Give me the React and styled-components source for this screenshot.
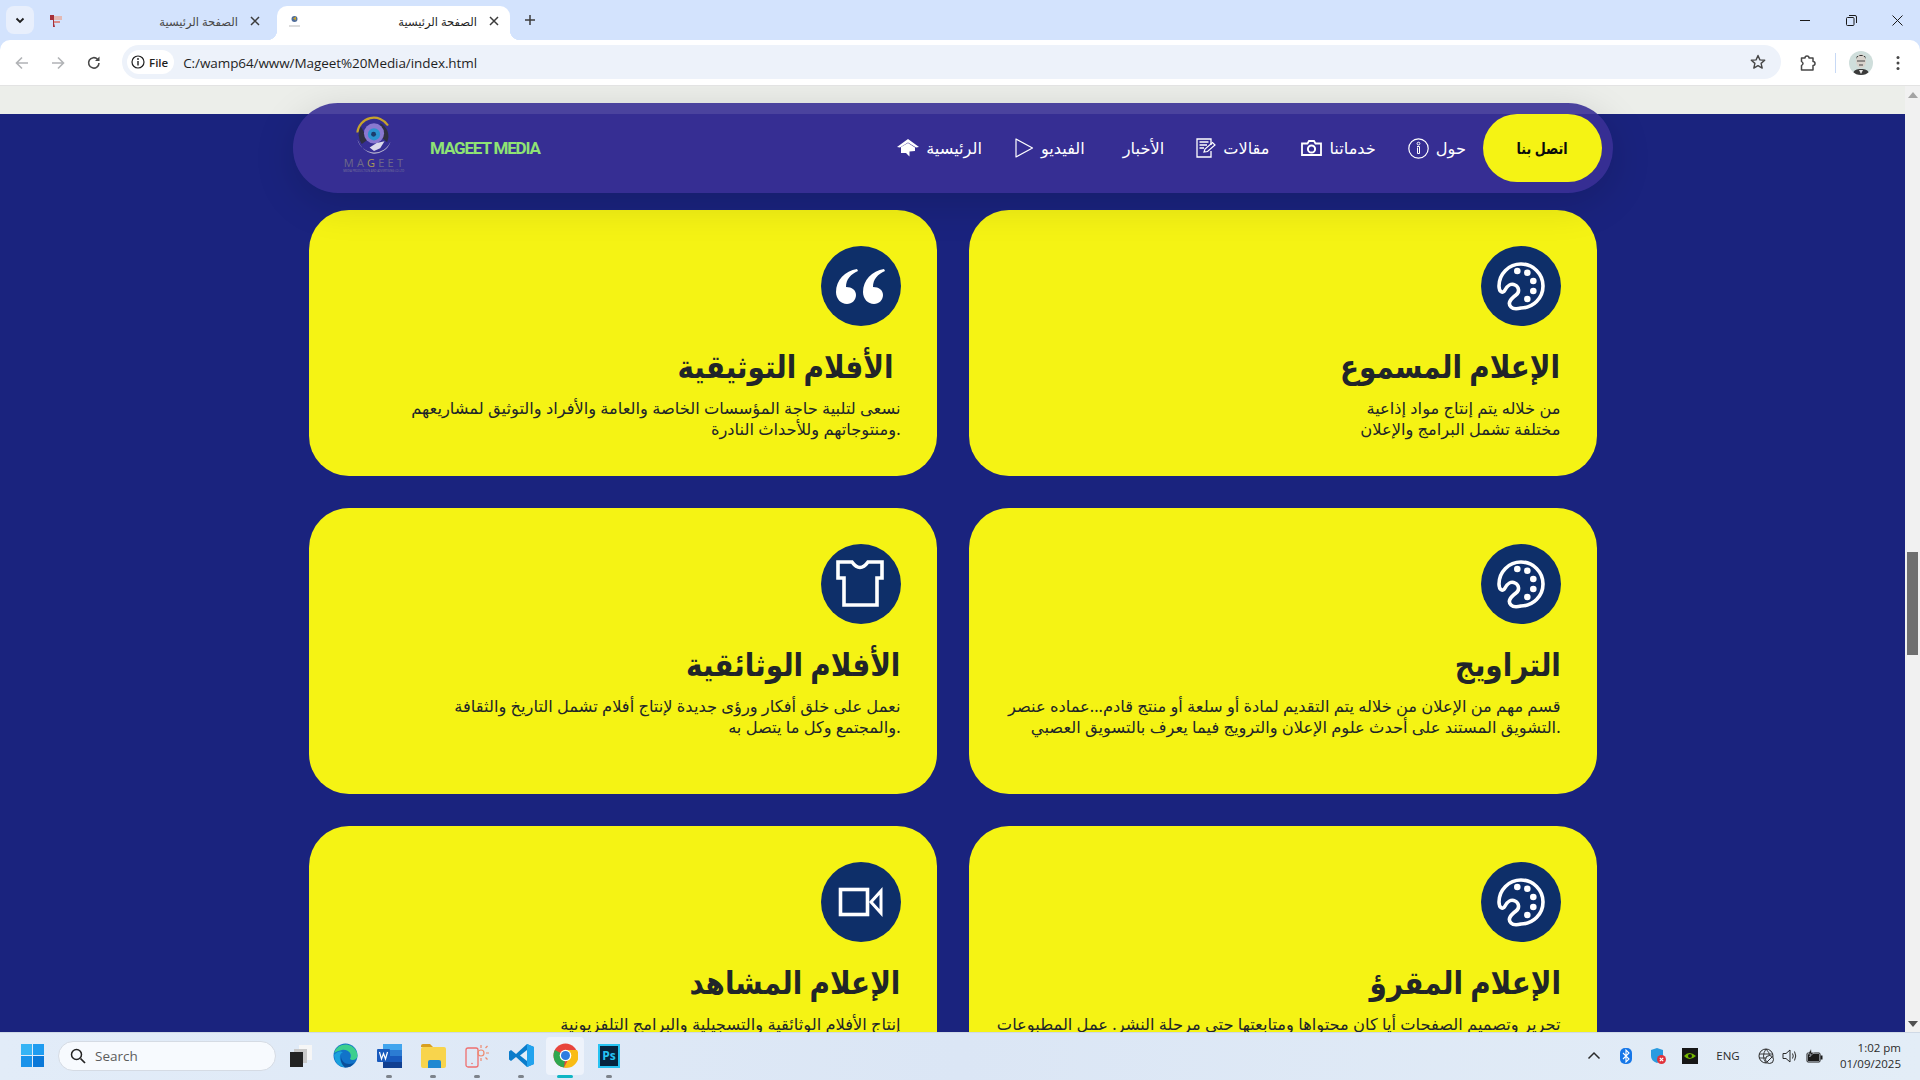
import React from "react";
import styled, { createGlobalStyle } from "styled-components";

const ARABIC = `"Noto Sans", "DejaVu Sans", sans-serif`;
const UI = `"Open Sans", "Noto Sans", "DejaVu Sans", sans-serif`;

const GlobalStyle = createGlobalStyle`
  html, body {
    margin: 0;
    padding: 0;
    height: 100%;
    overflow: hidden;
  }
  body {
    font-family: ${UI};
  }
`;

const Screen = styled.div`
  width: 1920px;
  height: 1080px;
  display: flex;
  flex-direction: column;
  overflow: hidden;
  background: #d3e3fd;
`;

/* browser chrome */
const TabStrip = styled.div`
  height: 40px;
  flex: none;
  display: flex;
  align-items: flex-end;
  background: #d3e3fd;
`;
const TabSearch = styled.div`
  width: 28px;
  height: 28px;
  margin: 0 0 6px 6px;
  border-radius: 8px;
  background: #e8effc;
  display: flex;
  align-items: center;
  justify-content: center;
`;
const Tab = styled.div`
  position: relative;
  width: 233px;
  height: 34px;
  margin-left: ${p => (p.$active ? "0" : "4px")};
  margin-right: ${p => (p.$active ? "0" : "6px")};
  padding: 0 8px 4px 11px;
  box-sizing: border-box;
  display: flex;
  align-items: center;
  border-radius: 10px 10px 0 0;
  color: ${p => (p.$active ? "#1f1f1f" : "#474747")};
  background: ${p => (p.$active ? "#fff" : "transparent")};
  ${p =>
    p.$active &&
    `
    &::before, &::after {
      content: "";
      position: absolute;
      bottom: 0;
      width: 10px;
      height: 10px;
    }
    &::before {
      left: -10px;
      background: radial-gradient(circle at 0 0, transparent 10px, #fff 10.5px);
    }
    &::after {
      right: -10px;
      background: radial-gradient(circle at 100% 0, transparent 10px, #fff 10.5px);
    }
  `}
`;
const TabTitle = styled.span`
  margin-left: auto;
  font-family: ${ARABIC};
  font-size: 11.5px;
  white-space: nowrap;
`;
const TabClose = styled.span`
  width: 16px;
  height: 16px;
  margin-left: 9px;
  display: flex;
  align-items: center;
  justify-content: center;
`;
const NewTab = styled.div`
  width: 28px;
  height: 28px;
  margin: 0 0 6px 6px;
  display: flex;
  align-items: center;
  justify-content: center;
`;
const WindowControls = styled.div`
  margin: 0 0 auto auto;
  display: flex;
  height: 40px;
`;
const WindowButton = styled.div`
  width: 46px;
  display: flex;
  align-items: center;
  justify-content: center;
`;

const Toolbar = styled.div`
  height: 46px;
  flex: none;
  box-sizing: border-box;
  padding: 0 4px;
  display: flex;
  align-items: center;
  background: #fff;
  border-radius: 10px 10px 0 0;
  border-bottom: 1px solid #e3e3e3;
`;
const ToolButton = styled.div`
  width: 36px;
  height: 36px;
  flex: none;
  margin-left: ${p => p.$ml || 0}px;
  display: flex;
  align-items: center;
  justify-content: center;
`;
const Omnibox = styled.div`
  flex: 1;
  height: 34px;
  margin: 0 0 1px 10px;
  padding: 0 15px 0 5px;
  border-radius: 17px;
  display: flex;
  align-items: center;
  background: #edf2fa;
`;
const FileChip = styled.div`
  height: 24px;
  padding: 0 6px 0 4px;
  display: flex;
  align-items: center;
  gap: 4px;
  border-radius: 12px;
  background: #fff;
  font-size: 11.5px;
  font-weight: 600;
  color: #1f1f1f;
`;
const Url = styled.span`
  margin: 1px auto 0 9px;
  font-size: 13.5px;
  color: #1f1f1f;
  letter-spacing: -0.08px;
`;
const ToolDivider = styled.div`
  width: 1px;
  height: 20px;
  margin-left: 9px;
  flex: none;
  background: #c7d9f5;
`;
const Avatar = styled.div`
  width: 24px;
  height: 24px;
  margin-left: 13px;
  flex: none;
  border-radius: 50%;
  overflow: hidden;
  background: #cfdedb;
`;

/* page */
const Body = styled.div`
  flex: 1;
  min-height: 0;
  display: flex;
`;
const Page = styled.div`
  position: relative;
  flex: 1;
  min-width: 0;
  display: flex;
  flex-direction: column;
  overflow: hidden;
  background: #eceeea;
`;
const TopGap = styled.div`
  height: 28px;
  flex: none;
`;
const Main = styled.main`
  flex: 1;
  padding-top: 96px;
  display: flex;
  justify-content: center;
  background: #1a237e;
`;
const CardGrid = styled.div`
  width: 1288px;
  display: grid;
  grid-template-columns: 628px 628px;
  grid-template-rows: 266px 286px 286px;
  gap: 32px;
`;
const Card = styled.article`
  padding: 36px 36px 0;
  display: flex;
  flex-direction: column;
  align-items: flex-end;
  box-sizing: border-box;
  border-radius: 40px;
  background: #f5f314;
  color: #212529;
  font-family: ${ARABIC};
`;
const IconDisc = styled.div`
  width: 80px;
  height: 80px;
  flex: none;
  border-radius: 50%;
  background: #0e2f69;
`;
const CardTitle = styled.h3`
  margin: 15px 0 7px;
  font-size: 32px;
  line-height: 50px;
  font-weight: 700;
  white-space: pre;
  text-align: right;
  transform: scaleX(0.87);
  transform-origin: right center;
`;
const CardText = styled.p`
  margin: 0;
  font-size: 16.3px;
  line-height: 21px;
  text-align: right;
  white-space: nowrap;
`;

const NavBar = styled.nav`
  position: absolute;
  top: 17px;
  left: 293px;
  z-index: 2;
  width: 1320px;
  height: 90px;
  box-sizing: border-box;
  padding: 0 11px 0 48px;
  display: flex;
  align-items: center;
  border-radius: 45px;
  background: rgba(58, 48, 150, 0.9);
  box-shadow: 0 10px 40px rgba(0, 0, 0, 0.15);
`;
const Logo = styled.div`
  width: 65px;
  height: 60px;
  margin-top: -6px;
  flex: none;
  display: flex;
  flex-direction: column;
  align-items: center;
`;
const LogoWord = styled.span`
  font-size: 11px;
  line-height: 11px;
  letter-spacing: 3.2px;
  margin-right: -3px;
  color: #6d6a88;
  b {
    color: #a89a58;
    font-weight: 400;
  }
`;
const LogoTag = styled.span`
  font-size: 4px;
  line-height: 5px;
  color: #7d7a9c;
  white-space: nowrap;
  transform: scale(0.68);
`;
const BrandName = styled.span`
  margin-left: 24px;
  font-family: Roboto, sans-serif;
  font-size: 17px;
  font-weight: 700;
  letter-spacing: -1.15px;
  color: #8fe374;
`;
const NavLinks = styled.div`
  margin-left: auto;
  display: flex;
  align-items: center;
  gap: 32px;
`;
const NavLink = styled.a`
  display: flex;
  align-items: center;
  gap: 7px;
  margin-left: ${p => p.$extra || 0}px;
  font-family: ${ARABIC};
  font-size: 16.2px;
  color: #fff;
  white-space: nowrap;
`;
const ContactButton = styled.a`
  width: 119px;
  height: 68px;
  margin-left: 17px;
  display: flex;
  align-items: center;
  justify-content: center;
  border-radius: 34px;
  background: #f5f314;
  color: #0b0b0b;
  font-family: ${ARABIC};
  font-size: 15.5px;
  font-weight: 700;
`;
const ContactLabel = styled.span`
  display: inline-block;
  transform: scaleX(0.82);
`;

const ScrollBar = styled.div`
  width: 15px;
  flex: none;
  display: flex;
  flex-direction: column;
  align-items: center;
  background: #f1f1f1;
`;
const ScrollArrow = styled.div`
  height: 17px;
  flex: none;
  display: flex;
  align-items: center;
  justify-content: center;
  margin-top: ${p => (p.$end ? "auto" : "0")};
`;
const ScrollThumb = styled.div`
  width: 11px;
  height: 103px;
  margin-top: 449px;
  background: #6f6f6f;
`;

/* taskbar */
const Taskbar = styled.footer`
  height: 48px;
  flex: none;
  box-sizing: border-box;
  padding: 0 19px 2px 21px;
  display: flex;
  align-items: center;
  border-top: 1px solid #cfd9e6;
  background: linear-gradient(90deg, #e2ecf8, #dbe6f5 50%, #e3edf7);
`;
const SearchBox = styled.div`
  width: 218px;
  height: 30px;
  margin: 0 3px 0 14px;
  box-sizing: border-box;
  padding-left: 11px;
  display: flex;
  align-items: center;
  gap: 9px;
  border-radius: 15px;
  border: 1px solid #d5dbe4;
  background: #f7fafe;
  font-size: 13.5px;
  color: #5c5c5c;
`;
const TaskSlot = styled.div`
  position: relative;
  width: 44px;
  height: 44px;
  flex: none;
  display: flex;
  align-items: center;
  justify-content: center;
`;
const ActiveBack = styled.div`
  position: absolute;
  left: 3px;
  top: 3px;
  width: 38px;
  height: 38px;
  border-radius: 4px;
  background: #eef3fb;
`;
const TaskIcon = styled.span`
  position: relative;
  display: flex;
`;
const TaskDot = styled.span`
  position: absolute;
  bottom: 0;
  left: 50%;
  height: 3px;
  width: ${p => (p.$active ? 16 : 6)}px;
  transform: translateX(-50%);
  border-radius: 2px;
  background: ${p => (p.$active ? "#0fb6c4" : "#7d838b")};
`;
const Tray = styled.div`
  margin-left: auto;
  display: flex;
  align-items: center;
`;
const TraySlot = styled.div`
  width: ${p => p.$w || 32}px;
  margin-left: ${p => p.$ml || 0}px;
  display: flex;
  justify-content: center;
  align-items: center;
`;
const TrayLang = styled.span`
  font-size: 11.5px;
  color: #2b2b2b;
`;
const Clock = styled.div`
  width: 75px;
  text-align: right;
  font-size: 11.5px;
  line-height: 16px;
  color: #2b2b2b;
`;

/* icons */
const Svg = ({ s = 16, h, children, ...rest }) => (
  <svg width={s} height={h || s} viewBox={`0 0 ${s} ${h || s}`} fill="none" {...rest}>
    {children}
  </svg>
);

const PaletteIcon = () => (
  <Svg s={80}>
    <path
      d="M40 18A22 22 0 1 1 40 62C36 63 32 63 30 61C26 57 30 53 35 49C39 46 38 41 34 39C30 37 26 40 24 44C22 48 18 46 18 40A22 22 0 0 1 40 18Z"
      stroke="#fff"
      strokeWidth="3.6"
      strokeLinejoin="round"
    />
    {[[36.3, 25], [46.3, 26.7], [52.3, 35], [52.3, 45], [46.3, 53]].map(([x, y]) => (
      <circle key={x + "-" + y} cx={x} cy={y} r="3.3" fill="#fff" />
    ))}
  </Svg>
);
const QuoteIcon = () => {
  const q = "M36 23C24 25 15 34 15 46C15 53 20 58 26 58C31 58 35 54 35 49C35 44 31 41 25 41C25 33 30 28 37 25Z";
  return (
    <Svg s={80}>
      <path d={q} fill="#fff" />
      <path d={q} fill="#fff" transform="translate(27 0)" />
    </Svg>
  );
};
const ShirtIcon = () => (
  <Svg s={80}>
    <path d="M17 18H31Q39 29 47 18H61V34H56V61H23V34H17Z" stroke="#fff" strokeWidth="3.6" />
  </Svg>
);
const VideoIcon = () => (
  <Svg s={80}>
    <rect x="19.5" y="27.5" width="27" height="25" stroke="#fff" strokeWidth="3.6" />
    <path d="M60 29V51L50 40Z" stroke="#fff" strokeWidth="3" />
  </Svg>
);

const HomeNav = () => (
  <Svg s={22} h={18}>
    <path d="M11 0L22 8L19 8.5L11 3.5L3 8.5L0 8Z" fill="#fff" />
    <path d="M4 8L11 4L18 8.5V12L12.5 12.5V17.5L9 14H4Z" fill="#fff" />
  </Svg>
);
const PlayNav = () => (
  <Svg s={20}>
    <path d="M2 1V19L18.5 10Z" stroke="#fff" strokeWidth="1.2" strokeLinejoin="round" />
  </Svg>
);
const ArticleNav = () => (
  <Svg s={20}>
    <path d="M15 7V1H1V19H15V13" stroke="#fff" strokeWidth="1.3" />
    <path d="M3.5 4H12.5M3.5 7H11M3.5 10H8" stroke="#fff" strokeWidth="1.3" />
    <path d="M8 14L9 11L16.5 4.5L19 7L11.5 13.5Z" stroke="#fff" strokeWidth="1.2" />
  </Svg>
);
const CameraNav = () => (
  <Svg s={21} h={16}>
    <path d="M1 3.5H6.5L8 1H13L14.5 3.5H20V15H1Z" stroke="#fff" strokeWidth="1.8" />
    <circle cx="10.5" cy="9" r="3.6" stroke="#fff" strokeWidth="2" />
  </Svg>
);
const InfoNav = () => (
  <Svg s={21}>
    <circle cx="10.5" cy="10.5" r="9.7" stroke="#fff" strokeWidth="1.2" />
    <circle cx="10.5" cy="5.6" r="1.4" stroke="#fff" />
    <path d="M9 8.5H11.5V15.5H9.5V9.5" stroke="#fff" />
  </Svg>
);

const LogoMark = () => (
  <svg width="42" height="42" viewBox="0 0 48 48" fill="none">
    <path d="M5 20A19 19 0 0 1 40 12" stroke="#c7a32b" strokeWidth="2.4" />
    <path d="M12 22L21 12L19 21Z" fill="#c7a32b" />
    <path d="M31 9A17 17 0 0 1 39 31L33 26Z" fill="#2f2f40" />
    <path d="M9 13A18 18 0 0 0 10 33L17 28Z" fill="#2f2f40" />
    <circle cx="24" cy="21" r="11.5" fill="#8a78d0" />
    <circle cx="24" cy="22" r="7" fill="#2b93cf" />
    <circle cx="23.5" cy="22" r="2.8" fill="#1b3b6b" />
    <path d="M5 28A20 20 0 0 0 43 30A19 19 0 0 1 22 44Q10 41 5 28Z" fill="#b6b4cf" />
    <path d="M19 37L27 32L36 30L31 38L24 41Z" fill="#dcdaeb" />
  </svg>
);

const Chevron = () => (
  <Svg s={12}>
    <path d="M2.5 4.5L6 8L9.5 4.5" stroke="#1f1f1f" strokeWidth="1.8" />
  </Svg>
);
const CloseX = () => (
  <Svg s={10}>
    <path d="M1 1L9 9M9 1L1 9" stroke="#3c3c3c" strokeWidth="1.5" />
  </Svg>
);
const Plus = () => (
  <Svg s={12}>
    <path d="M6 1V11M1 6H11" stroke="#3c3c3c" strokeWidth="1.5" />
  </Svg>
);
const FavOne = () => (
  <Svg s={14}>
    <path d="M1 1H5V9L6 13L4 13V6H1Z" fill="#a5303a" />
    <path d="M5 2H13V6H5Z" fill="#e3b9b4" />
    <path d="M5 7H11V9H5Z" fill="#d98b88" />
  </Svg>
);
const FavTwo = () => (
  <Svg s={13}>
    <circle cx="6.5" cy="4" r="3" fill="#4f6d9c" />
    <path d="M5 3.5L8 1.5L8 5.5Z" fill="#c7a32b" />
    <path d="M1 10H12V12H1Z" fill="#dcdcdc" />
  </Svg>
);
const Minimize = () => (
  <Svg s={10}>
    <path d="M0 5.5H10" stroke="#1a1a1a" />
  </Svg>
);
const Restore = () => (
  <Svg s={11}>
    <rect x="0.5" y="2.5" width="7.5" height="8" rx="1" stroke="#1a1a1a" />
    <path d="M3 0.5H9A1.5 1.5 0 0 1 10.5 2V8" stroke="#1a1a1a" />
  </Svg>
);
const WinClose = () => (
  <Svg s={11}>
    <path d="M0.5 0.5L10.5 10.5M10.5 0.5L0.5 10.5" stroke="#1a1a1a" />
  </Svg>
);
const Back = ({ flip }) => (
  <Svg s={16} style={flip ? { transform: "scaleX(-1)" } : undefined}>
    <path d="M14 8H2.5M8 2.5L2.5 8L8 13.5" stroke="#b1b3b6" strokeWidth="1.6" />
  </Svg>
);
const Reload = () => (
  <Svg s={16}>
    <path d="M13 8A5.2 5.2 0 1 1 11.5 4.2" stroke="#474747" strokeWidth="1.6" />
    <path d="M13.5 1.5V6H9Z" fill="#474747" />
  </Svg>
);
const InfoSmall = () => (
  <Svg s={14}>
    <circle cx="7" cy="7" r="6" stroke="#1f1f1f" strokeWidth="1.2" />
    <path d="M7 6V10.5" stroke="#1f1f1f" strokeWidth="1.4" />
    <circle cx="7" cy="4" r="0.9" fill="#1f1f1f" />
  </Svg>
);
const Star = () => (
  <Svg s={16}>
    <path
      d="M8 1.5L9.9 5.9L14.7 6.3L11.1 9.4L12.2 14.1L8 11.6L3.8 14.1L4.9 9.4L1.3 6.3L6.1 5.9Z"
      stroke="#474747"
      strokeWidth="1.4"
      strokeLinejoin="round"
    />
  </Svg>
);
const Puzzle = () => (
  <Svg s={18}>
    <path
      d="M2.5 4H6A2 2 0 0 1 10 4H14V7.5A2 2 0 0 1 14 11.5V16H2.5V11.5Q5.5 9.5 2.5 7.5Z"
      stroke="#474747"
      strokeWidth="1.5"
      strokeLinejoin="round"
    />
  </Svg>
);
const Dots = () => (
  <Svg s={16}>
    <circle cx="8" cy="2.5" r="1.5" fill="#474747" />
    <circle cx="8" cy="8" r="1.5" fill="#474747" />
    <circle cx="8" cy="13.5" r="1.5" fill="#474747" />
  </Svg>
);
const Face = () => (
  <Svg s={24}>
    <ellipse cx="12" cy="10" rx="5" ry="7" fill="#d8d3cc" />
    <path d="M7 8Q12 0 17 8L16 5H8Z" fill="#2a2a2a" />
    <path d="M8 10H16M10 14H14" stroke="#444" strokeWidth="1.2" />
    <path d="M3 24Q5 17 12 18Q19 17 21 24Z" fill="#3a3a3a" />
    <path d="M10 19L12 23L14 19Z" fill="#e6e6e6" />
  </Svg>
);

const WinLogo = () => (
  <Svg s={23} style={{ flex: "none" }}>
    <rect width="11" height="11" fill="#36b4f5" />
    <rect x="12" width="11" height="11" fill="#1f9cf0" />
    <rect y="12" width="11" height="11" fill="#1a93ea" />
    <rect x="12" y="12" width="11" height="11" fill="#0a78d8" />
  </Svg>
);
const SearchGlyph = () => (
  <Svg s={16} style={{ flex: "none" }}>
    <circle cx="6.5" cy="6.5" r="5" stroke="#222" strokeWidth="1.5" />
    <path d="M10.5 10.5L15 15" stroke="#222" strokeWidth="1.7" />
  </Svg>
);
const TaskView = () => (
  <Svg s={24}>
    <rect x="10" y="1" width="13" height="15" fill="#f6f6f6" />
    <rect x="5" y="5" width="13" height="14" fill="#c9c9c9" />
    <rect x="1" y="8" width="13" height="15" fill="#232323" />
  </Svg>
);
const Edge = () => (
  <Svg s={25}>
    <circle cx="12.5" cy="12.5" r="12" fill="#1173c9" />
    <path d="M1 10A12 12 0 0 1 24.5 13C24 17 19 18 17 16C20 11 15 6 9 7Q4 8 1 10Z" fill="#3dcf8e" />
    <path d="M8 13C8 19 14 23 21 20Q18 24.5 12 24.5Q7 22 8 13Z" fill="#0a4f9a" />
    <path d="M1 12Q5 7 10 9Q6 11 7 16Q8 21 12 24.5Q2 23 1 12Z" fill="#1aa1de" />
  </Svg>
);
const Word = () => (
  <Svg s={25} h={26}>
    <rect x="6" y="1" width="19" height="24" rx="1.5" fill="#2b7cd3" />
    <rect x="6" y="1" width="19" height="6" fill="#41a5ee" />
    <rect x="6" y="13" width="19" height="6" fill="#185abd" />
    <rect x="6" y="19" width="19" height="6" fill="#103f91" />
    <rect y="6" width="13" height="13" rx="1" fill="#185abd" />
    <path d="M2.5 9L4.5 16L6.5 10.5L8.5 16L10.5 9" stroke="#fff" strokeWidth="1.2" />
  </Svg>
);
const Folder = () => (
  <Svg s={25} h={26}>
    <path d="M0 3A2 2 0 0 1 2 1H9L12 4H0Z" fill="#d99f1f" />
    <rect y="4" width="25" height="21" rx="2" fill="#f8d44c" />
    <path d="M7 25V19A2 2 0 0 1 9 17H18A2 2 0 0 1 20 19V25Z" fill="#1f88d2" />
  </Svg>
);
const PhoneLink = () => (
  <Svg s={24} h={25}>
    <rect x="1" y="5" width="12" height="19" rx="2" stroke="#ee6f6f" strokeWidth="1.3" />
    <circle cx="7" cy="20.5" r="0.8" fill="#ee6f6f" />
    <circle cx="16" cy="10" r="3" stroke="#ee8a6f" strokeWidth="1.2" />
    <path d="M16 2V5M16 15V18M24 10H21M20.5 5L22.5 3M20.5 14.5L22.5 16.5" stroke="#ee8a6f" strokeWidth="1.2" />
  </Svg>
);
const VsCode = () => (
  <Svg s={25}>
    <path d="M18 1L25 4V21L18 24L7 14L2 18L0 16.5V8.5L2 7L7 11Z" fill="#0a7ccb" />
    <path d="M18 7L11 12.5L18 18Z" fill="#e2edf8" />
    <path d="M18 1L25 4V21L18 24Z" fill="#22a3ee" />
  </Svg>
);
const ChromeLogo = () => (
  <Svg s={25}>
    <circle cx="12.5" cy="12.5" r="12" fill="#e8453c" />
    <path d="M12.5 12.5L1.9 7A12 12 0 0 0 11 24.5Z" fill="#2fa84f" />
    <path d="M12.5 7H24A12 12 0 0 1 11 24.5L16 15Z" fill="#f9bc15" />
    <circle cx="12.5" cy="12.5" r="5.8" fill="#fff" />
    <circle cx="12.5" cy="12.5" r="4.5" fill="#2f7de1" />
  </Svg>
);
const PhotoshopBox = styled.div`
  width: 22px;
  height: 24px;
  box-sizing: border-box;
  border: 2px solid #27c3f3;
  background: #06243f;
  color: #27c3f3;
  font-size: 12px;
  font-weight: 700;
  line-height: 20px;
  text-align: center;
`;

const Caret = () => (
  <Svg s={14} h={9}>
    <path d="M1.5 7.5L7 2L12.5 7.5" stroke="#2b2b2b" strokeWidth="1.5" />
  </Svg>
);
const Bluetooth = () => (
  <Svg s={12} h={16}>
    <rect width="12" height="16" rx="5" fill="#1677e8" />
    <path d="M3 5L9 11L6 14V2L9 5L3 11" stroke="#fff" strokeWidth="1.1" />
  </Svg>
);
const Shield = () => (
  <Svg s={16}>
    <path d="M1 2L7 0L13 2V8Q13 13 7 15Q1 13 1 8Z" fill="#2a9be0" />
    <circle cx="11.5" cy="11.5" r="4.5" fill="#e0333c" />
    <path d="M9.8 9.8L13.2 13.2M13.2 9.8L9.8 13.2" stroke="#fff" strokeWidth="1.2" />
  </Svg>
);
const Nvidia = () => (
  <Svg s={16}>
    <rect width="16" height="16" fill="#161616" />
    <path d="M2 8Q7 2 14 8Q7 14 2 8Z" fill="#76b900" />
    <circle cx="8" cy="8" r="2" fill="#161616" />
  </Svg>
);
const Globe = () => (
  <Svg s={16}>
    <circle cx="8" cy="8" r="7" stroke="#2b2b2b" />
    <path d="M1 6H15M1 10H11M8 1Q3 8 8 15M8 1Q12 5 11.5 8" stroke="#2b2b2b" strokeWidth="0.9" />
    <circle cx="11.5" cy="11.5" r="4" fill="#e1ebf6" stroke="#2b2b2b" />
    <path d="M9 14L14 9" stroke="#2b2b2b" />
  </Svg>
);
const Speaker = () => (
  <Svg s={16}>
    <path d="M1 5.5H4L8 2V14L4 10.5H1Z" stroke="#2b2b2b" />
    <path d="M10.5 5.5Q12 8 10.5 10.5M12.5 3.5Q15 8 12.5 12.5" stroke="#2b2b2b" />
  </Svg>
);
const Battery = () => (
  <Svg s={17} h={14}>
    <rect x="1" y="4" width="13" height="9" rx="1" stroke="#1a1a1a" />
    <rect x="2" y="5" width="11" height="7" fill="#1a1a1a" />
    <rect x="14.5" y="6.5" width="2" height="4" fill="#1a1a1a" />
    <path d="M5 0L2 5H5L3.5 8L8 3.5H5.5Z" fill="#1a1a1a" stroke="#e1ebf6" strokeWidth="0.5" />
  </Svg>
);

const navItems = [
  { label: "الرئيسية", icon: <HomeNav /> },
  { label: "الفيديو", icon: <PlayNav /> },
  { label: "الأخبار", extra: 6 },
  { label: "مقالات", icon: <ArticleNav /> },
  { label: "خدماتنا", icon: <CameraNav /> },
  { label: "حول", icon: <InfoNav /> }
];

const cards = [
  {
    icon: <QuoteIcon />,
    title: "الأفلام التوثيقية\u00a0",
    lines: ["نسعى لتلبية حاجة المؤسسات الخاصة والعامة والأفراد والتوثيق لمشاريعهم", "ومنتوجاتهم وللأحداث النادرة."]
  },
  {
    icon: <PaletteIcon />,
    title: "الإعلام المسموع",
    lines: ["من خلاله يتم إنتاج مواد إذاعية", "مختلفة تشمل البرامج والإعلان"]
  },
  {
    icon: <ShirtIcon />,
    title: "الأفلام الوثائقية",
    lines: ["نعمل على خلق أفكار ورؤى جديدة لإنتاج أفلام تشمل التاريخ والثقافة", "والمجتمع وكل ما يتصل به."]
  },
  {
    icon: <PaletteIcon />,
    title: "التراويج",
    lines: [
      "قسم مهم من الإعلان من خلاله يتم التقديم لمادة أو سلعة أو منتج قادم...عماده عنصر",
      "التشويق المستند على أحدث علوم الإعلان والترويج فيما يعرف بالتسويق العصبي."
    ]
  },
  {
    icon: <VideoIcon />,
    title: "الإعلام المشاهد",
    lines: ["إنتاج الأفلام الوثائقية والتسجيلية والبرامج التلفزيونية"]
  },
  {
    icon: <PaletteIcon />,
    title: "الإعلام المقرؤ",
    lines: ["تحرير وتصميم الصفحات أيا كان محتواها ومتابعتها حتى مرحلة النشر. عمل المطبوعات"]
  }
];

const taskApps = [
  { key: "view", icon: <TaskView /> },
  { key: "edge", icon: <Edge /> },
  { key: "word", icon: <Word />, dot: true },
  { key: "files", icon: <Folder />, dot: true },
  { key: "phone", icon: <PhoneLink />, dot: true },
  { key: "code", icon: <VsCode />, dot: true },
  { key: "chrome", icon: <ChromeLogo />, active: true },
  { key: "ps", icon: <PhotoshopBox>Ps</PhotoshopBox>, dot: true }
];

export default function App() {
  return (
    <Screen>
      <GlobalStyle />
      <TabStrip>
        <TabSearch>
          <Chevron />
        </TabSearch>
        <Tab>
          <FavOne />
          <TabTitle>الصفحة الرئيسية</TabTitle>
          <TabClose>
            <CloseX />
          </TabClose>
        </Tab>
        <Tab $active>
          <FavTwo />
          <TabTitle>الصفحة الرئيسية</TabTitle>
          <TabClose>
            <CloseX />
          </TabClose>
        </Tab>
        <NewTab>
          <Plus />
        </NewTab>
        <WindowControls>
          <WindowButton>
            <Minimize />
          </WindowButton>
          <WindowButton>
            <Restore />
          </WindowButton>
          <WindowButton>
            <WinClose />
          </WindowButton>
        </WindowControls>
      </TabStrip>

      <Toolbar>
        <ToolButton>
          <Back />
        </ToolButton>
        <ToolButton>
          <Back flip />
        </ToolButton>
        <ToolButton>
          <Reload />
        </ToolButton>
        <Omnibox>
          <FileChip>
            <InfoSmall />
            File
          </FileChip>
          <Url>C:/wamp64/www/Mageet%20Media/index.html</Url>
          <Star />
        </Omnibox>
        <ToolButton $ml={9}>
          <Puzzle />
        </ToolButton>
        <ToolDivider />
        <Avatar>
          <Face />
        </Avatar>
        <ToolButton $ml={7}>
          <Dots />
        </ToolButton>
      </Toolbar>

      <Body>
        <Page>
          <NavBar>
            <Logo>
              <LogoMark />
              <LogoWord>
                MA<b>G</b>EET
              </LogoWord>
              <LogoTag>MEDIA PRODUCTION AND ADVERTISING CO.LTD</LogoTag>
            </Logo>
            <BrandName>MAGEET MEDIA</BrandName>
            <NavLinks>
              {navItems.map(item => (
                <NavLink key={item.label} $extra={item.extra}>
                  {item.icon}
                  {item.label}
                </NavLink>
              ))}
            </NavLinks>
            <ContactButton>
              <ContactLabel>اتصل بنا</ContactLabel>
            </ContactButton>
          </NavBar>
          <TopGap />
          <Main>
            <CardGrid>
              {cards.map(card => (
                <Card key={card.title}>
                  <IconDisc>{card.icon}</IconDisc>
                  <CardTitle>{card.title}</CardTitle>
                  {card.lines.map(line => (
                    <CardText key={line}>{line}</CardText>
                  ))}
                </Card>
              ))}
            </CardGrid>
          </Main>
        </Page>
        <ScrollBar>
          <ScrollArrow>
            <Svg s={10} h={8}>
              <path d="M5 1L10 7H0Z" fill="#a3a3a3" />
            </Svg>
          </ScrollArrow>
          <ScrollThumb />
          <ScrollArrow $end>
            <Svg s={10} h={8}>
              <path d="M5 7L10 1H0Z" fill="#505050" />
            </Svg>
          </ScrollArrow>
        </ScrollBar>
      </Body>

      <Taskbar>
        <WinLogo />
        <SearchBox>
          <SearchGlyph />
          Search
        </SearchBox>
        {taskApps.map(app => (
          <TaskSlot key={app.key}>
            {app.active && <ActiveBack />}
            <TaskIcon>{app.icon}</TaskIcon>
            {(app.dot || app.active) && <TaskDot $active={app.active} />}
          </TaskSlot>
        ))}
        <Tray>
          <TraySlot>
            <Caret />
          </TraySlot>
          <TraySlot>
            <Bluetooth />
          </TraySlot>
          <TraySlot>
            <Shield />
          </TraySlot>
          <TraySlot>
            <Nvidia />
          </TraySlot>
          <TraySlot $w={44}>
            <TrayLang>ENG</TrayLang>
          </TraySlot>
          <TraySlot $w={24} $ml={4}>
            <Globe />
          </TraySlot>
          <TraySlot $w={24}>
            <Speaker />
          </TraySlot>
          <TraySlot $w={24}>
            <Battery />
          </TraySlot>
          <Clock>
            1:02 pm
            <br />
            01/09/2025
          </Clock>
        </Tray>
      </Taskbar>
    </Screen>
  );
}
